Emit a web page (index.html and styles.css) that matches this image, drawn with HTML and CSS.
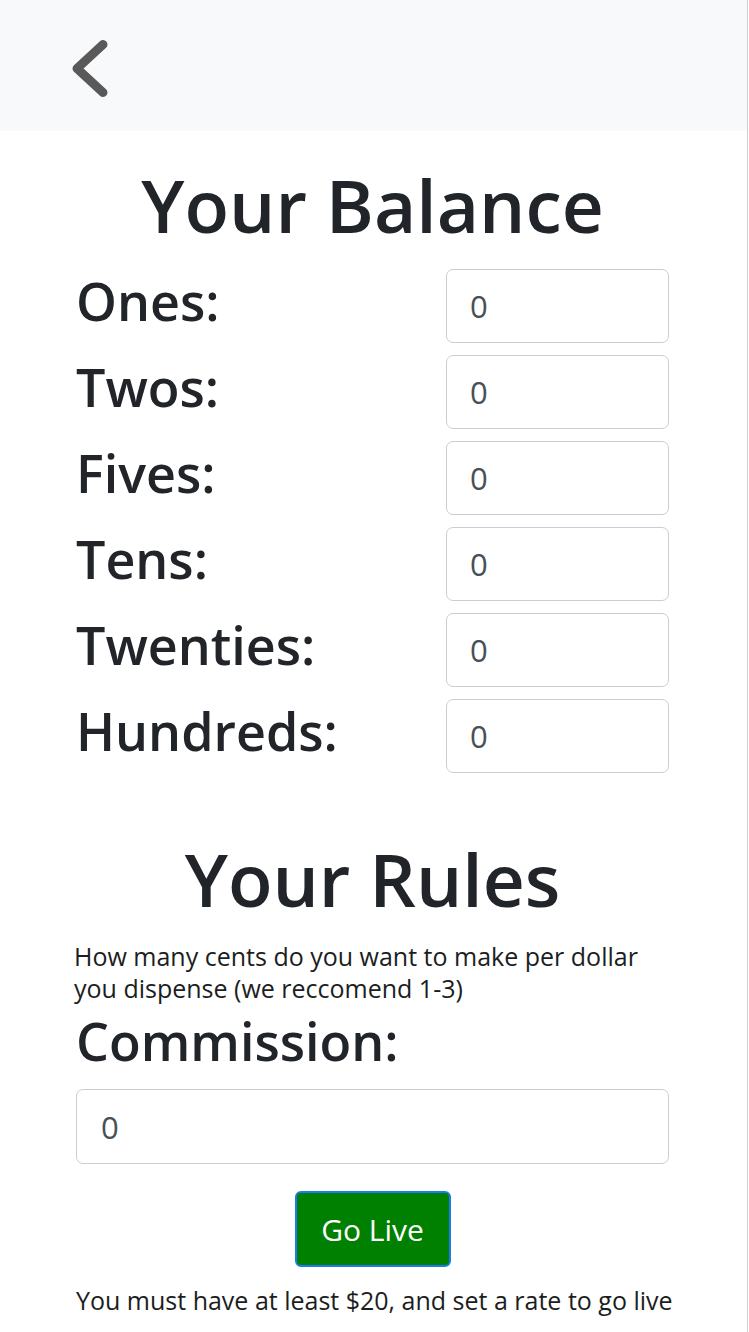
FILE: index.html
```html
<!DOCTYPE html>
<html lang="en">
<head>
<meta charset="utf-8">
<title>Your Balance</title>
<link rel="stylesheet" href="styles.css">
</head>
<body>
<div class="page">
  <header class="topbar">
    <a class="back" href="#" aria-label="Back">
      <svg class="back-icon" width="48" height="66" viewBox="0 0 48 66">
        <path d="M37 8.5 L11 32.5 L37 56.5" fill="none" stroke="#595959" stroke-width="9" stroke-linecap="round" stroke-linejoin="round"/>
      </svg>
    </a>
  </header>
  <main class="main">
    <h1 class="title">Your Balance</h1>
    <div class="rows">
      <div class="row"><span class="label">Ones:</span><input class="field" type="text" value="0"></div>
      <div class="row"><span class="label">Twos:</span><input class="field" type="text" value="0"></div>
      <div class="row"><span class="label">Fives:</span><input class="field" type="text" value="0"></div>
      <div class="row"><span class="label">Tens:</span><input class="field" type="text" value="0"></div>
      <div class="row"><span class="label">Twenties:</span><input class="field" type="text" value="0"></div>
      <div class="row"><span class="label">Hundreds:</span><input class="field" type="text" value="0"></div>
    </div>
    <h1 class="title rules-title">Your Rules</h1>
    <p class="hint">How many cents do you want to make per dollar you dispense (we reccomend 1-3)</p>
    <div class="label commission-label">Commission:</div>
    <input class="field field-wide" type="text" value="0">
    <div class="actions">
      <button class="go-live" type="button">Go Live</button>
    </div>
    <p class="note">You must have at least $20, and set a rate to go live</p>
  </main>
</div>
</body>
</html>
```

FILE: styles.css
```css
html, body {
  margin: 0;
  padding: 0;
  background: #ffffff;
}

body {
  font-family: "Open Sans", "Noto Sans", sans-serif;
  color: #212529;
}

.page {
  width: 748px;
  min-height: 1332px;
  border-right: 1px solid #cfd0d1;
  box-sizing: border-box;
}

.topbar {
  height: 131px;
  background: #f8f9fa;
  display: flex;
  align-items: flex-start;
  padding: 36px 0 0 66px;
  box-sizing: border-box;
}

.back {
  display: block;
  line-height: 0;
}

.back-icon {
  display: block;
}

.main {
  width: 593px;
  margin: 0 0 0 76px;
}

.title {
  margin: 26px 0 0;
  font-size: 73px;
  line-height: 96px;
  font-weight: 600;
  text-align: center;
  color: #212529;
}

.rows {
  margin-top: 16px;
  display: flex;
  flex-direction: column;
  gap: 12px;
}

.row {
  display: grid;
  grid-template-columns: 1fr 223px;
  align-items: start;
  height: 74px;
}

.label {
  font-size: 52px;
  line-height: 64px;
  font-weight: 600;
  color: #212529;
}

.field {
  box-sizing: border-box;
  width: 223px;
  height: 74px;
  margin: 0;
  padding: 0 23px;
  border: 1px solid #c9ced4;
  border-radius: 7px;
  background: #fff;
  font-family: "Open Sans", "Noto Sans", sans-serif;
  font-size: 31px;
  color: #495057;
  outline: none;
}

.rules-title {
  margin-top: 58px;
}

.hint {
  margin: 13px 0 0 -2px;
  font-size: 25px;
  line-height: 32px;
  color: #1b1e21;
}

.commission-label {
  margin-top: 5px;
}

.field-wide {
  display: block;
  width: 593px;
  height: 75px;
  margin-top: 16px;
  padding: 0 24px;
}

.actions {
  display: flex;
  justify-content: center;
  margin-top: 27px;
}

.go-live {
  box-sizing: border-box;
  height: 76px;
  width: 156px;
  padding: 0;
  background: #008000;
  color: #ffffff;
  border: 2px solid #1a7cf5;
  border-radius: 6px;
  font-family: "Open Sans", "Noto Sans", sans-serif;
  font-size: 30px;
  cursor: pointer;
}

.note {
  margin: 17px 0 0;
  font-size: 25px;
  line-height: 32px;
  text-align: center;
  white-space: nowrap;
  color: #1b1e21;
}
```
